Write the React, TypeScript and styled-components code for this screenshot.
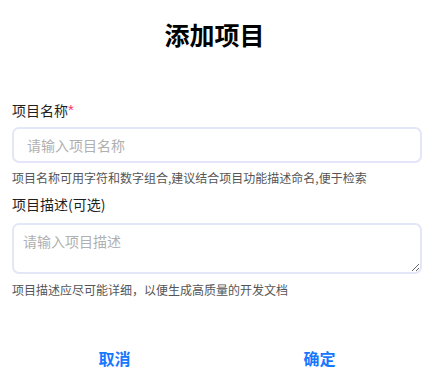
import React from 'react';
import styled, { createGlobalStyle } from 'styled-components';

const GlobalStyle = createGlobalStyle`
  html, body {
    margin: 0;
    background: #ffffff;
    font-family: "Noto Sans CJK SC", "Noto Sans", sans-serif;
  }
`;

const Dialog = styled.div`
  display: flex;
  flex-direction: column;
  width: 429px;
  padding: 20px 7px 0 12px;
  box-sizing: border-box;
`;

const Title = styled.h2`
  margin: 0 0 52px;
  font-size: 25px;
  line-height: 28px;
  font-weight: 700;
  color: #000;
  text-align: center;
  padding-right: 5px;
`;

const Label = styled.label<{ $gap: number }>`
  display: block;
  font-size: 14px;
  line-height: 20px;
  color: #1f1f1f;
  margin-bottom: ${(p) => p.$gap}px;
`;

const Required = styled.span`
  color: #ff2e6e;
  font-size: 15px;
  font-family: "Liberation Sans", sans-serif;
  vertical-align: 1px;
`;

const Input = styled.input`
  box-sizing: border-box;
  width: 410px;
  height: 36px;
  padding: 0 13px;
  border: 2px solid #e3e6f6;
  border-radius: 7px;
  font-family: inherit;
  font-size: 14px;
  color: #333;
  outline: none;

  &::placeholder {
    color: #b0b0b0;
  }
`;

const TextArea = styled.textarea`
  box-sizing: border-box;
  width: 410px;
  height: 51px;
  padding: 6px 9px;
  border: 2px solid #e3e6f6;
  border-radius: 7px;
  font-family: inherit;
  font-size: 14px;
  line-height: 20px;
  color: #333;
  outline: none;
  resize: vertical;
  display: block;

  &::placeholder {
    color: #b0b0b0;
  }
`;

const Hint = styled.div<{ $top: number; $bottom: number }>`
  font-size: 12px;
  line-height: 18px;
  color: #555;
  margin-top: ${(p) => p.$top}px;
  margin-bottom: ${(p) => p.$bottom}px;
`;

const Actions = styled.div`
  display: flex;
  width: 410px;
  margin-top: 39px;
`;

const ActionButton = styled.button`
  flex: 1;
  height: 40px;
  border: none;
  background: transparent;
  font-family: inherit;
  font-size: 16px;
  font-weight: 700;
  color: #1677ff;
  cursor: pointer;
`;

export default function App() {
  return (
    <Dialog>
      <GlobalStyle />
      <Title>添加项目</Title>

      <Label $gap={7}>
        项目名称<Required>*</Required>
      </Label>
      <Input placeholder="请输入项目名称" />
      <Hint $top={6} $bottom={7}>
        项目名称可用字符和数字组合,建议结合项目功能描述命名,便于检索
      </Hint>

      <Label $gap={9}>项目描述(可选)</Label>
      <TextArea placeholder="请输入项目描述" />
      <Hint $top={7} $bottom={0}>
        项目描述应尽可能详细，以便生成高质量的开发文档
      </Hint>

      <Actions>
        <ActionButton>取消</ActionButton>
        <ActionButton>确定</ActionButton>
      </Actions>
    </Dialog>
  );
}
